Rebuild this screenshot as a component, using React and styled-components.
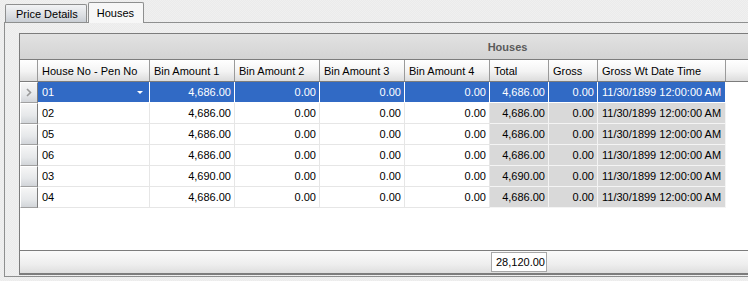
import React from "react";
import styled, { createGlobalStyle, css } from "styled-components";

const GlobalStyle = createGlobalStyle`
  html, body {
    margin: 0;
    padding: 0;
    background: #f0f0f0;
  }
  body {
    font-family: "Liberation Sans", Arial, sans-serif;
    font-size: 11px;
    color: #000;
  }
`;

const dither = css`
  background-image: repeating-conic-gradient(rgba(0, 0, 0, 0.018) 0 25%, transparent 0 50%);
  background-size: 2px 2px;
`;

const Screen = styled.div`
  width: 748px;
  height: 281px;
  overflow: hidden;
  ${dither};
`;

const TabStrip = styled.div`
  display: flex;
  align-items: flex-end;
  height: 22px;
  padding-left: 5px;
`;

const Tab = styled.div`
  box-sizing: border-box;
  display: flex;
  align-items: center;
  border: 1px solid #8e8f8f;
  border-bottom: none;
  border-radius: 2px 2px 0 0;
  margin-right: 1px;
  ${(p) =>
    p.$active
      ? css`
          height: 21px;
          padding: 0 9px 0 8px;
          background: #f7f7f7;
          position: relative;
          top: 1px;
          z-index: 1;
        `
      : css`
          height: 18px;
          padding: 0 8px 0 10px;
          background: linear-gradient(#f2f3f5, #dcdfe3 60%, #c9ced4);
        `}
`;

const TabPage = styled.div`
  box-sizing: border-box;
  margin-left: 4px;
  width: 1010px;
  height: 255px;
  border: 1px solid #8e8f8f;
  border-right: none;
  padding: 10px 0 0 14px;
`;

const Grid = styled.div`
  box-sizing: border-box;
  width: 976px;
  height: 242px;
  border: 1px solid #7c7c7c;
  border-right: none;
  background: #fff;
  display: flex;
  flex-direction: column;
`;

const GroupBand = styled.div`
  height: 25px;
  flex: none;
  display: flex;
  align-items: center;
  justify-content: center;
  font-weight: bold;
  color: #5a5a5a;
  background: linear-gradient(#e2e2e2, #d3d3d3);
`;

const cols = "18px 112px 85px 85px 85px 85px 59px 49px 128px 1fr";

const HeaderRow = styled.div`
  display: grid;
  grid-template-columns: ${cols};
  height: 21px;
  flex: none;
  border-top: 1px solid #7c7c7c;
  border-bottom: 1px solid #7c7c7c;
`;

const HeaderCell = styled.div`
  display: flex;
  align-items: center;
  padding-left: 4px;
  border-right: 1px solid #9a9a9a;
  background: linear-gradient(#ffffff, #f3f3f3 55%, #dcdcdc);
  white-space: nowrap;
  overflow: hidden;
`;

const Body = styled.div`
  flex: 1;
`;

const DataRow = styled.div`
  display: grid;
  grid-template-columns: ${cols};
  height: 21px;
`;

const Indicator = styled.div`
  box-sizing: border-box;
  display: flex;
  align-items: center;
  justify-content: center;
  border: 1px solid #a0a0a0;
  border-top-color: #fff;
  border-left-color: #fff;
  border-right-color: #7c7c7c;
  background: linear-gradient(#f6f6f6, #e6e8ea 60%, #d2d5d9);
  color: #8a8a8a;
`;

const Cell = styled.div`
  box-sizing: border-box;
  display: flex;
  align-items: center;
  justify-content: ${(p) => (p.$right ? "flex-end" : "flex-start")};
  padding: ${(p) => (p.$right ? "0 3px 0 0" : "0 0 0 4px")};
  white-space: nowrap;
  overflow: hidden;
  border-right: 1px solid ${(p) => (p.$sel ? "#ffffff" : p.$ro ? "#f4f4f4" : "#e6e6e6")};
  border-bottom: 1px solid ${(p) => (p.$sel ? "#ffffff" : p.$ro ? "#f4f4f4" : "#e6e6e6")};
  background: ${(p) => (p.$sel ? "#316ac5" : p.$ro ? "#d9d9d9" : "#ffffff")};
  color: ${(p) => (p.$sel ? "#ffffff" : "#000000")};
`;

const Filler = styled.div`
  background: #fff;
`;

const DropArrow = styled.span`
  margin-left: auto;
  margin-right: 6px;
  width: 0;
  height: 0;
  border-left: 3px solid transparent;
  border-right: 3px solid transparent;
  border-top: 3px solid #ffffff;
`;

const Footer = styled.div`
  display: grid;
  grid-template-columns: 471px 56px 1fr;
  height: 22px;
  flex: none;
  border-top: 1px solid #7c7c7c;
  border-bottom: 1px solid #7c7c7c;
  background: linear-gradient(#fafafa, #eeeeee 60%, #dedede);
  align-items: center;
`;

const TotalBox = styled.div`
  box-sizing: border-box;
  grid-column: 2;
  height: 20px;
  display: flex;
  align-items: center;
  padding-left: 4px;
  background: #fff;
  border: 1px solid #a8a8a8;
`;

const Chevron = () => (
  <svg width="6" height="9" viewBox="0 0 6 9">
    <path d="M1 1 L4.5 4.5 L1 8" fill="none" stroke="#9a9a9a" strokeWidth="1.6" />
  </svg>
);

const headers = [
  "",
  "House No - Pen No",
  "Bin Amount 1",
  "Bin Amount 2",
  "Bin Amount 3",
  "Bin Amount 4",
  "Total",
  "Gross",
  "Gross Wt Date Time",
  "",
];

const rows = [
  { house: "01", bin1: "4,686.00", total: "4,686.00" },
  { house: "02", bin1: "4,686.00", total: "4,686.00" },
  { house: "05", bin1: "4,686.00", total: "4,686.00" },
  { house: "06", bin1: "4,686.00", total: "4,686.00" },
  { house: "03", bin1: "4,690.00", total: "4,690.00" },
  { house: "04", bin1: "4,686.00", total: "4,686.00" },
];

export default function App() {
  return (
    <Screen>
      <GlobalStyle />
      <TabStrip>
        <Tab>Price Details</Tab>
        <Tab $active>Houses</Tab>
      </TabStrip>
      <TabPage>
        <Grid>
          <GroupBand>Houses</GroupBand>
          <HeaderRow>
            {headers.map((h, i) => (
              <HeaderCell key={i}>{h}</HeaderCell>
            ))}
          </HeaderRow>
          <Body>
            {rows.map((r, i) => {
              const sel = i === 0;
              return (
                <DataRow key={i}>
                  <Indicator>{sel && <Chevron />}</Indicator>
                  <Cell $sel={sel}>
                    {r.house}
                    {sel && <DropArrow />}
                  </Cell>
                  <Cell $sel={sel} $right>{r.bin1}</Cell>
                  <Cell $sel={sel} $right>0.00</Cell>
                  <Cell $sel={sel} $right>0.00</Cell>
                  <Cell $sel={sel} $right>0.00</Cell>
                  <Cell $sel={sel} $ro $right>{r.total}</Cell>
                  <Cell $sel={sel} $ro $right>0.00</Cell>
                  <Cell $sel={sel} $ro>11/30/1899 12:00:00 AM</Cell>
                  <Filler />
                </DataRow>
              );
            })}
          </Body>
          <Footer>
            <TotalBox>28,120.00</TotalBox>
          </Footer>
        </Grid>
      </TabPage>
    </Screen>
  );
}
